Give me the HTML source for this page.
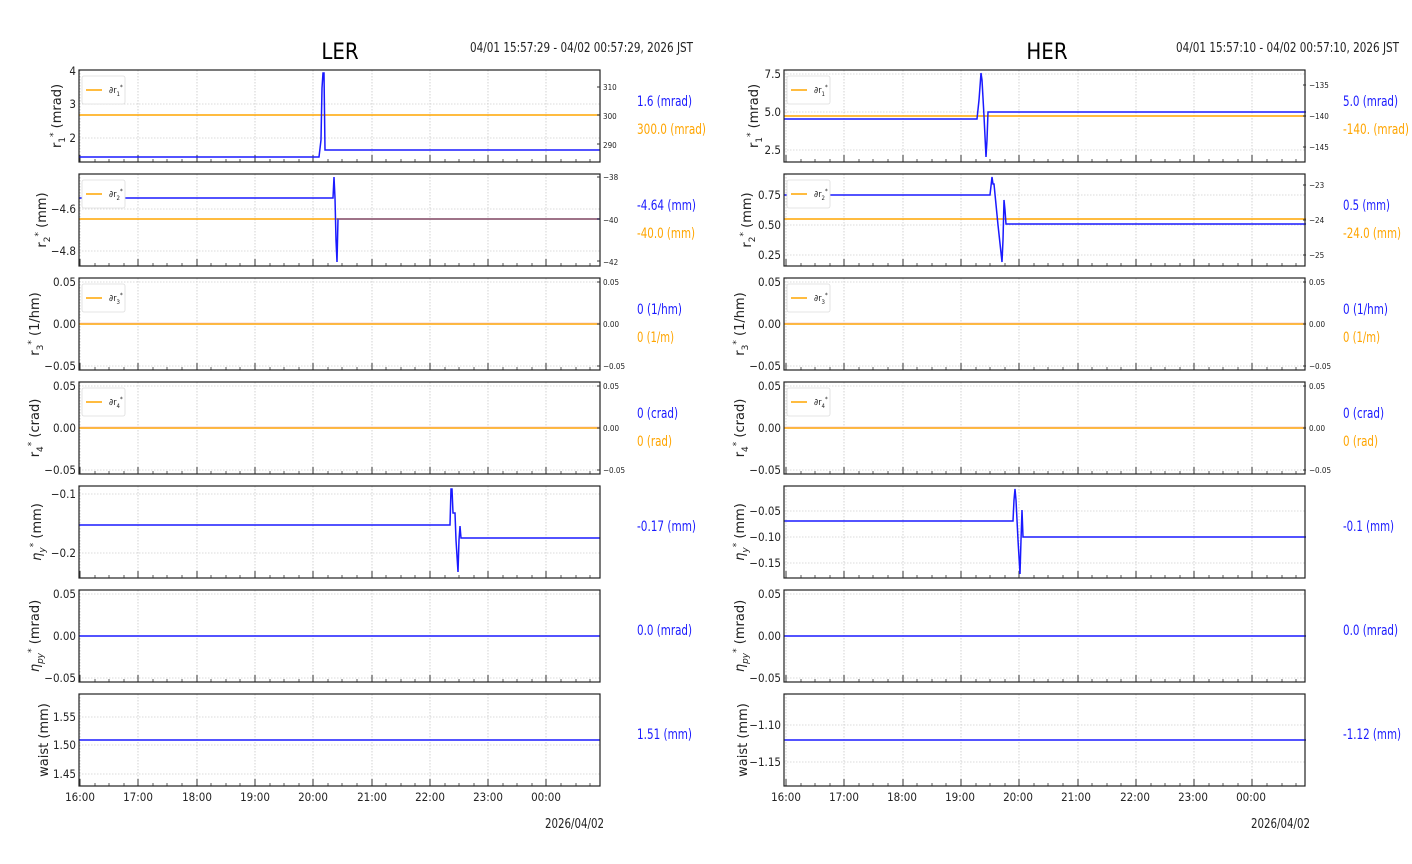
<!DOCTYPE html>
<html><head><meta charset="utf-8"><style>
html,body{margin:0;padding:0;background:#fff}
svg{display:block}
.t{font-family:"DejaVu Sans Condensed","Liberation Sans Narrow","Liberation Sans",sans-serif;font-stretch:condensed;fill:#222}
.tk{font-size:11.5px}
.sm{font-size:8px}
.yl{font-family:"DejaVu Sans","Liberation Sans",sans-serif;font-size:13px;fill:#222}
.vb{font-size:14px;fill:#1a1aff}
.vo{font-size:14px;fill:#ffa500}
</style></head><body>
<svg width="1412" height="864" viewBox="0 0 1412 864" xmlns="http://www.w3.org/2000/svg">
<defs>
<g id="g">
<path d="M1 0V92M59 0V92M118 0V92M176 0V92M234 0V92M293 0V92M351 0V92M409 0V92M467 0V92" stroke="#c8c8c8" stroke-width="0.8" stroke-dasharray="1.5,1.5"/>
<path d="M1 92v-7M59 92v-7M118 92v-7M176 92v-7M234 92v-7M293 92v-7M351 92v-7M409 92v-7M467 92v-7" stroke="#333" stroke-width="1"/>
<path d="M16 92v-3M30 92v-3M45 92v-3M74 92v-3M88 92v-3M103 92v-3M132 92v-3M147 92v-3M161 92v-3M191 92v-3M205 92v-3M220 92v-3M249 92v-3M263 92v-3M278 92v-3M307 92v-3M322 92v-3M336 92v-3M366 92v-3M380 92v-3M395 92v-3M424 92v-3M438 92v-3M453 92v-3M482 92v-3M497 92v-3M511 92v-3" stroke="#333" stroke-width="0.8"/>
</g>
<rect id="fr" x="0" y="0" width="521" height="92" fill="none" stroke="#222" stroke-width="1.2"/>
<g id="lg">
<rect x="0" y="0" width="43" height="28" rx="2" fill="#fff" stroke="#ddd" stroke-width="0.8"/>
<path d="M4 14H20" stroke="#ffa500" stroke-width="1.5"/>
</g>
</defs>

<text class="t" x="340" y="59" font-size="22" text-anchor="middle" style="fill:#000">LER</text>
<text class="t" x="470" y="52" font-size="13" textLength="223" lengthAdjust="spacingAndGlyphs">04/01 15:57:29 - 04/02 00:57:29, 2026 JST</text>
<text class="t" x="1047" y="59" font-size="22" text-anchor="middle" style="fill:#000">HER</text>
<text class="t" x="1176" y="52" font-size="13" textLength="223" lengthAdjust="spacingAndGlyphs">04/01 15:57:10 - 04/02 00:57:10, 2026 JST</text>

<g stroke-width="0.8" stroke="#d0d0d0" stroke-dasharray="1.5,1.5" fill="none">
<path d="M79 104H600M79 138H600M79 209H600M79 251H600M79 282H600M79 324H600M79 366H600M79 386H600M79 428H600M79 470H600M79 494H600M79 553H600M79 594H600M79 636H600M79 678H600M79 717H600M79 745H600M79 774H600"/>
<path d="M784 74H1306M784 112H1306M784 150H1306M784 195H1306M784 225H1306M784 255H1306M784 282H1306M784 324H1306M784 366H1306M784 386H1306M784 428H1306M784 470H1306M784 511H1306M784 537H1306M784 563H1306M784 594H1306M784 636H1306M784 678H1306M784 725H1306M784 762H1306"/>
</g>
<use href="#g" x="79" y="70"/><use href="#g" x="79" y="174"/><use href="#g" x="79" y="278"/><use href="#g" x="79" y="382"/><use href="#g" x="79" y="486"/><use href="#g" x="79" y="590"/><use href="#g" x="79" y="694"/>
<use href="#g" x="785" y="70"/><use href="#g" x="785" y="174"/><use href="#g" x="785" y="278"/><use href="#g" x="785" y="382"/><use href="#g" x="785" y="486"/><use href="#g" x="785" y="590"/><use href="#g" x="785" y="694"/>

<g fill="none" stroke-width="1.5">
<path d="M79 115H600" stroke="#ffa500"/>
<path d="M79 157H319L321 140L322 88L323 73L324 73L325 150H600" stroke="#1a1aff"/>
<path d="M79 219H600" stroke="#ffa500"/>
<path d="M79 198H333L334 177L335 198L336 240L337 262L338 219H600" stroke="#1a1aff"/>
<path d="M338 219H600" stroke="#b07050" stroke-width="1"/>
<path d="M79 324H600" stroke="#ffa500"/><path d="M79 323H600" stroke="#f0b0a0" stroke-width="0.6"/>
<path d="M79 428H600" stroke="#ffa500"/><path d="M79 427H600" stroke="#f0b0a0" stroke-width="0.6"/>
<path d="M79 525H450L451 489L452 489L453 513L455 513L456 540L458 572L459 540L460 526L461 538H600" stroke="#1a1aff"/>
<path d="M79 636H600" stroke="#1a1aff"/>
<path d="M79 740H600" stroke="#1a1aff"/>
<path d="M784 116H1306" stroke="#ffa500"/>
<path d="M784 119H977L979 100L981 73L982 80L984 116L986 157L987 140L988 112H1306" stroke="#1a1aff"/>
<path d="M784 219H1306" stroke="#ffa500"/>
<path d="M784 195H990L992 177L993 184L994 184L998 225L1002 262L1003 240L1004 200L1005 210L1006 224H1306" stroke="#1a1aff"/>
<path d="M784 324H1306" stroke="#ffa500"/><path d="M784 323H1306" stroke="#f0b0a0" stroke-width="0.6"/>
<path d="M784 428H1306" stroke="#ffa500"/><path d="M784 427H1306" stroke="#f0b0a0" stroke-width="0.6"/>
<path d="M784 521H1013L1014 500L1015 489L1016 500L1018 540L1020 574L1021 540L1022 510L1023 537H1306" stroke="#1a1aff"/>
<path d="M784 636H1306" stroke="#1a1aff"/>
<path d="M784 740H1306" stroke="#1a1aff"/>
</g>

<use href="#fr" x="79" y="70"/><use href="#fr" x="79" y="174"/><use href="#fr" x="79" y="278"/><use href="#fr" x="79" y="382"/><use href="#fr" x="79" y="486"/><use href="#fr" x="79" y="590"/><use href="#fr" x="79" y="694"/>
<use href="#fr" x="784" y="70"/><use href="#fr" x="784" y="174"/><use href="#fr" x="784" y="278"/><use href="#fr" x="784" y="382"/><use href="#fr" x="784" y="486"/><use href="#fr" x="784" y="590"/><use href="#fr" x="784" y="694"/>

<use href="#lg" x="82" y="76"/><use href="#lg" x="82" y="180"/><use href="#lg" x="82" y="284"/><use href="#lg" x="82" y="388"/>
<use href="#lg" x="787" y="76"/><use href="#lg" x="787" y="180"/><use href="#lg" x="787" y="284"/><use href="#lg" x="787" y="388"/>
<g class="t" font-size="9">
<text x="109" y="93">∂r<tspan font-size="6" dy="3">1</tspan><tspan font-size="6" dy="-7">*</tspan></text>
<text x="109" y="197">∂r<tspan font-size="6" dy="3">2</tspan><tspan font-size="6" dy="-7">*</tspan></text>
<text x="109" y="301">∂r<tspan font-size="6" dy="3">3</tspan><tspan font-size="6" dy="-7">*</tspan></text>
<text x="109" y="405">∂r<tspan font-size="6" dy="3">4</tspan><tspan font-size="6" dy="-7">*</tspan></text>
<text x="814" y="93">∂r<tspan font-size="6" dy="3">1</tspan><tspan font-size="6" dy="-7">*</tspan></text>
<text x="814" y="197">∂r<tspan font-size="6" dy="3">2</tspan><tspan font-size="6" dy="-7">*</tspan></text>
<text x="814" y="301">∂r<tspan font-size="6" dy="3">3</tspan><tspan font-size="6" dy="-7">*</tspan></text>
<text x="814" y="405">∂r<tspan font-size="6" dy="3">4</tspan><tspan font-size="6" dy="-7">*</tspan></text>
</g>

<g class="t tk" text-anchor="end">
<text x="76" y="75">4</text><text x="76" y="108">3</text><text x="76" y="142">2</text>
<text x="76" y="213">−4.6</text><text x="76" y="255">−4.8</text>
<text x="76" y="286">0.05</text><text x="76" y="328">0.00</text><text x="76" y="370">−0.05</text>
<text x="76" y="390">0.05</text><text x="76" y="432">0.00</text><text x="76" y="474">−0.05</text>
<text x="76" y="498">−0.1</text><text x="76" y="557">−0.2</text>
<text x="76" y="598">0.05</text><text x="76" y="640">0.00</text><text x="76" y="682">−0.05</text>
<text x="76" y="721">1.55</text><text x="76" y="749">1.50</text><text x="76" y="778">1.45</text>
<text x="781" y="78">7.5</text><text x="781" y="116">5.0</text><text x="781" y="154">2.5</text>
<text x="781" y="199">0.75</text><text x="781" y="229">0.50</text><text x="781" y="259">0.25</text>
<text x="781" y="286">0.05</text><text x="781" y="328">0.00</text><text x="781" y="370">−0.05</text>
<text x="781" y="390">0.05</text><text x="781" y="432">0.00</text><text x="781" y="474">−0.05</text>
<text x="781" y="515">−0.05</text><text x="781" y="541">−0.10</text><text x="781" y="567">−0.15</text>
<text x="781" y="598">0.05</text><text x="781" y="640">0.00</text><text x="781" y="682">−0.05</text>
<text x="781" y="729">−1.10</text><text x="781" y="766">−1.15</text>
</g>
<g class="t sm">
<text x="603" y="90">310</text><text x="603" y="119">300</text><text x="603" y="148">290</text>
<text x="603" y="180">−38</text><text x="603" y="223">−40</text><text x="603" y="265">−42</text>
<text x="603" y="285">0.05</text><text x="603" y="327">0.00</text><text x="603" y="369">−0.05</text>
<text x="603" y="389">0.05</text><text x="603" y="431">0.00</text><text x="603" y="473">−0.05</text>
<text x="1309" y="88">−135</text><text x="1309" y="119">−140</text><text x="1309" y="150">−145</text>
<text x="1309" y="188">−23</text><text x="1309" y="223">−24</text><text x="1309" y="258">−25</text>
<text x="1309" y="285">0.05</text><text x="1309" y="327">0.00</text><text x="1309" y="369">−0.05</text>
<text x="1309" y="389">0.05</text><text x="1309" y="431">0.00</text><text x="1309" y="473">−0.05</text>
</g>
<path d="M600 87h-3M600 115h-3M600 144h-3M600 177h-3M600 219h-3M600 261h-3M600 282h-3M600 324h-3M600 366h-3M600 386h-3M600 428h-3M600 470h-3M1306 85h-3M1306 116h-3M1306 147h-3M1306 185h-3M1306 220h-3M1306 255h-3M1306 282h-3M1306 324h-3M1306 366h-3M1306 386h-3M1306 428h-3M1306 470h-3" stroke="#333"/>

<g class="yl" text-anchor="middle">
<text transform="translate(61,116) rotate(-90)">r<tspan font-size="9" dy="4">1</tspan><tspan font-size="9" dy="-9">*</tspan><tspan dy="5">  (mrad)</tspan></text>
<text transform="translate(46,220) rotate(-90)">r<tspan font-size="9" dy="4">2</tspan><tspan font-size="9" dy="-9">*</tspan><tspan dy="5">  (mm)</tspan></text>
<text transform="translate(39,324) rotate(-90)">r<tspan font-size="9" dy="4">3</tspan><tspan font-size="9" dy="-9">*</tspan><tspan dy="5">  (1/hm)</tspan></text>
<text transform="translate(39,428) rotate(-90)">r<tspan font-size="9" dy="4">4</tspan><tspan font-size="9" dy="-9">*</tspan><tspan dy="5">  (crad)</tspan></text>
<text transform="translate(41,532) rotate(-90)"><tspan font-style="italic">η</tspan><tspan font-size="9" dy="4" font-style="italic">y</tspan><tspan font-size="9" dy="-9">*</tspan><tspan dy="5">  (mm)</tspan></text>
<text transform="translate(39,636) rotate(-90)"><tspan font-style="italic">η</tspan><tspan font-size="9" dy="4" font-style="italic">py</tspan><tspan font-size="9" dy="-9">*</tspan><tspan dy="5">  (mrad)</tspan></text>
<text transform="translate(48,740) rotate(-90)">waist  (mm)</text>
<text transform="translate(758,116) rotate(-90)">r<tspan font-size="9" dy="4">1</tspan><tspan font-size="9" dy="-9">*</tspan><tspan dy="5">  (mrad)</tspan></text>
<text transform="translate(751,220) rotate(-90)">r<tspan font-size="9" dy="4">2</tspan><tspan font-size="9" dy="-9">*</tspan><tspan dy="5">  (mm)</tspan></text>
<text transform="translate(744,324) rotate(-90)">r<tspan font-size="9" dy="4">3</tspan><tspan font-size="9" dy="-9">*</tspan><tspan dy="5">  (1/hm)</tspan></text>
<text transform="translate(744,428) rotate(-90)">r<tspan font-size="9" dy="4">4</tspan><tspan font-size="9" dy="-9">*</tspan><tspan dy="5">  (crad)</tspan></text>
<text transform="translate(744,532) rotate(-90)"><tspan font-style="italic">η</tspan><tspan font-size="9" dy="4" font-style="italic">y</tspan><tspan font-size="9" dy="-9">*</tspan><tspan dy="5">  (mm)</tspan></text>
<text transform="translate(744,636) rotate(-90)"><tspan font-style="italic">η</tspan><tspan font-size="9" dy="4" font-style="italic">py</tspan><tspan font-size="9" dy="-9">*</tspan><tspan dy="5">  (mrad)</tspan></text>
<text transform="translate(747,740) rotate(-90)">waist  (mm)</text>
</g>

<g class="t tk" text-anchor="middle">
<text x="80" y="801">16:00</text><text x="138" y="801">17:00</text><text x="197" y="801">18:00</text><text x="255" y="801">19:00</text><text x="313" y="801">20:00</text><text x="372" y="801">21:00</text><text x="430" y="801">22:00</text><text x="488" y="801">23:00</text><text x="546" y="801">00:00</text>
<text x="786" y="801">16:00</text><text x="844" y="801">17:00</text><text x="902" y="801">18:00</text><text x="960" y="801">19:00</text><text x="1018" y="801">20:00</text><text x="1076" y="801">21:00</text><text x="1135" y="801">22:00</text><text x="1193" y="801">23:00</text><text x="1251" y="801">00:00</text>
</g>
<text class="t" x="545" y="828" font-size="13" textLength="59" lengthAdjust="spacingAndGlyphs">2026/04/02</text>
<text class="t" x="1251" y="828" font-size="13" textLength="59" lengthAdjust="spacingAndGlyphs">2026/04/02</text>

<g class="t" lengthAdjust="spacingAndGlyphs">
<text class="vb" x="637" y="106" textLength="55" lengthAdjust="spacingAndGlyphs">1.6 (mrad)</text><text class="vo" x="637" y="134" textLength="69" lengthAdjust="spacingAndGlyphs">300.0 (mrad)</text>
<text class="vb" x="637" y="210" textLength="59" lengthAdjust="spacingAndGlyphs">-4.64 (mm)</text><text class="vo" x="637" y="238" textLength="58" lengthAdjust="spacingAndGlyphs">-40.0 (mm)</text>
<text class="vb" x="637" y="314" textLength="45" lengthAdjust="spacingAndGlyphs">0 (1/hm)</text><text class="vo" x="637" y="342" textLength="37" lengthAdjust="spacingAndGlyphs">0 (1/m)</text>
<text class="vb" x="637" y="418" textLength="41" lengthAdjust="spacingAndGlyphs">0 (crad)</text><text class="vo" x="637" y="446" textLength="35" lengthAdjust="spacingAndGlyphs">0 (rad)</text>
<text class="vb" x="637" y="531" textLength="59" lengthAdjust="spacingAndGlyphs">-0.17 (mm)</text>
<text class="vb" x="637" y="635" textLength="55" lengthAdjust="spacingAndGlyphs">0.0 (mrad)</text>
<text class="vb" x="637" y="739" textLength="55" lengthAdjust="spacingAndGlyphs">1.51 (mm)</text>
<text class="vb" x="1343" y="106" textLength="55" lengthAdjust="spacingAndGlyphs">5.0 (mrad)</text><text class="vo" x="1343" y="134" textLength="66" lengthAdjust="spacingAndGlyphs">-140. (mrad)</text>
<text class="vb" x="1343" y="210" textLength="47" lengthAdjust="spacingAndGlyphs">0.5 (mm)</text><text class="vo" x="1343" y="238" textLength="58" lengthAdjust="spacingAndGlyphs">-24.0 (mm)</text>
<text class="vb" x="1343" y="314" textLength="45" lengthAdjust="spacingAndGlyphs">0 (1/hm)</text><text class="vo" x="1343" y="342" textLength="37" lengthAdjust="spacingAndGlyphs">0 (1/m)</text>
<text class="vb" x="1343" y="418" textLength="41" lengthAdjust="spacingAndGlyphs">0 (crad)</text><text class="vo" x="1343" y="446" textLength="35" lengthAdjust="spacingAndGlyphs">0 (rad)</text>
<text class="vb" x="1343" y="531" textLength="51" lengthAdjust="spacingAndGlyphs">-0.1 (mm)</text>
<text class="vb" x="1343" y="635" textLength="55" lengthAdjust="spacingAndGlyphs">0.0 (mrad)</text>
<text class="vb" x="1343" y="739" textLength="58" lengthAdjust="spacingAndGlyphs">-1.12 (mm)</text>
</g>
</svg>
</body></html>
